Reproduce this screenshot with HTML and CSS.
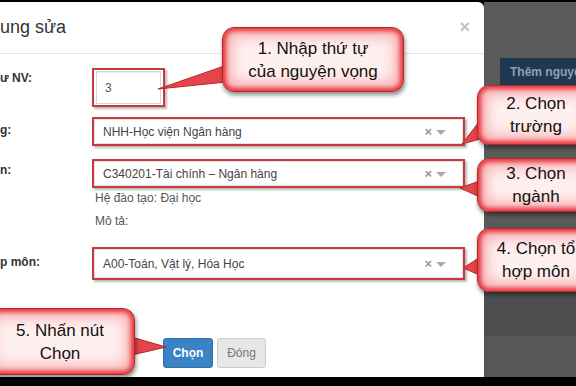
FILE: index.html
```html
<!DOCTYPE html>
<html lang="vi">
<head>
<meta charset="utf-8">
<link rel="stylesheet" href="styles.css">
</head>
<body>
<div class="stage">
  <div class="modal">
    <div class="modal-header">
      <span class="title">ung sửa</span>
      <span class="close">×</span>
    </div>
    <div class="modal-body">
      <div class="row r1">
        <label class="lbl">ư NV:</label>
        <div class="hl hl-input"><div class="input">3</div></div>
      </div>
      <div class="row r2">
        <label class="lbl">g:</label>
        <div class="hl"><div class="select"><span>NHH-Học viện Ngân hàng</span><span class="ctl"><span class="x">×</span><span class="caret"></span></span></div></div>
      </div>
      <div class="row r3">
        <label class="lbl">n:</label>
        <div class="field">
          <div class="hl"><div class="select"><span>C340201-Tài chính – Ngân hàng</span><span class="ctl"><span class="x">×</span><span class="caret"></span></span></div></div>
          <p class="help">Hệ đào tạo: Đại học</p>
          <p class="help">Mô tả:</p>
        </div>
      </div>
      <div class="row r4">
        <label class="lbl">p môn:</label>
        <div class="hl tall"><div class="select"><span>A00-Toán, Vật lý, Hóa Học</span><span class="ctl"><span class="x">×</span><span class="caret"></span></span></div></div>
      </div>
    </div>
    <div class="modal-footer">
      <button class="btn btn-primary">Chọn</button>
      <button class="btn btn-default">Đóng</button>
    </div>
  </div>
  <div class="backdrop">
    <div class="bd-top"><div class="add-btn">Thêm nguyện vọng</div></div>
    <div class="bd-mid"></div>
    <div class="bd-bot"></div>
  </div>
</div>

<svg class="pointers" width="576" height="386" viewBox="0 0 576 386">
  <polygon points="230,64 246,80 158,89"/>
  <polygon points="482,118 484,138 462,144"/>
  <polygon points="482,180 482,198 460,188"/>
  <polygon points="482,256 482,276 463,268"/>
  <polygon points="128,336 128,356 166,347"/>
</svg>

<div class="callout c1">1. Nhập thứ tự<br>của nguyện vọng</div>
<div class="callout c2">2. Chọn<br>trường</div>
<div class="callout c3">3. Chọn<br>ngành</div>
<div class="callout c4">4. Chọn tổ<br>hợp môn</div>
<div class="callout c5">5. Nhấn nút<br>Chọn</div>
</body>
</html>
```

FILE: styles.css
```css
* { box-sizing: border-box; }
html, body { margin: 0; padding: 0; }
body {
  width: 576px;
  height: 386px;
  overflow: hidden;
  background: #000;
  position: relative;
  font-family: "Liberation Sans", Arial, sans-serif;
  color: #333;
}
.stage {
  display: flex;
  padding-top: 2px;
  height: 377px;
}
.modal {
  flex: 0 0 484px;
  width: 484px;
  background: #fff;
  border-top-right-radius: 6px;
  display: flex;
  flex-direction: column;
}
.modal-header {
  height: 52px;
  border-bottom: 1px solid #e5e5e5;
  display: flex;
  align-items: center;
  justify-content: space-between;
  padding: 0 14px 0 0;
}
.title { font-size: 18px; color: #333; }
.close { font-size: 18px; color: #c4c4c4; font-weight: bold; }
.modal-body {
  padding: 14px 19px 0 0;
  display: flex;
  flex-direction: column;
}
.row {
  display: grid;
  grid-template-columns: 92px 1fr;
  align-items: start;
}
.r2 { margin-top: 10px; }
.r3 { margin-top: 13px; }
.r4 { margin-top: 14px; }
.lbl {
  font-size: 12px;
  font-weight: bold;
  line-height: 14px;
  color: #333;
}
.r1 .lbl { padding-top: 3px; }
.r2 .lbl { padding-top: 6px; }
.r3 .lbl { padding-top: 4px; }
.r4 .lbl { padding-top: 8px; }
.hl {
  border: 2px solid #c9393d;
  box-shadow: 2px 2px 2px rgba(0,0,0,.28);
}
.hl-input {
  width: 73px;
  padding: 1px 2px;
}
.input {
  height: 33px;
  border: 1px solid #d6d6d6;
  box-shadow: inset 0 1px 1px rgba(0,0,0,.08);
  font-size: 12px;
  color: #555;
  display: flex;
  align-items: center;
  padding-left: 8px;
}
.select {
  height: 25px;
  border: 1px solid #e2e2e2;
  display: flex;
  align-items: center;
  justify-content: space-between;
  font-size: 12px;
  color: #444;
  padding: 0 16px 0 8px;
}
.tall .select { height: 29px; }
.ctl { display: flex; align-items: center; gap: 4px; }
.x { color: #999; font-size: 13px; font-weight: bold; line-height: 12px; }
.caret {
  width: 0; height: 0;
  border-left: 5px solid transparent;
  border-right: 5px solid transparent;
  border-top: 5px solid #aaa;
  margin-top: 2px;
}
.help {
  margin: 0;
  font-size: 12px;
  line-height: 23px;
  color: #555;
  padding-left: 3px;
}
.help:first-of-type { margin-top: -1px; }
.modal-footer {
  margin-top: auto;
  padding: 0 0 9px 163px;
  display: flex;
  gap: 4px;
}
.btn {
  height: 30px;
  font-family: "Liberation Sans", Arial, sans-serif;
  font-size: 12px;
  border-radius: 3px;
  padding: 0;
}
.btn-primary {
  width: 50px;
  background: #3a84c5;
  border: 1px solid #2e6fa8;
  color: #fff;
  font-weight: bold;
}
.btn-default {
  width: 49px;
  background: #e6e7e8;
  border: 1px solid #ccc;
  color: #777;
}
.backdrop {
  flex: 1 1 auto;
  min-width: 0;
  display: flex;
  flex-direction: column;
}
.bd-top {
  flex: 1;
  background: #5a5a5a;
  padding: 56px 0 0 16px;
  overflow: hidden;
}
.bd-mid { height: 44px; background: #4c4e4f; }
.bd-bot { height: 41px; background: #565758; }
.add-btn {
  height: 28px;
  width: 120px;
  background: #1f3850;
  color: #8d9fb4;
  font-size: 12px;
  font-weight: bold;
  white-space: nowrap;
  padding-left: 10px;
  display: flex;
  align-items: center;
}
.pointers {
  position: absolute;
  left: 0; top: 0;
}
.pointers polygon {
  fill: #e5454a;
  stroke: #b3282d;
  stroke-width: 1;
  stroke-linejoin: round;
}
.callout {
  position: absolute;
  background: #fff0f0;
  border: 1px solid #b3262b;
  border-radius: 12px;
  box-shadow: inset 0 0 4px 3px #e8363c, inset 0 0 14px 8px rgba(240,95,100,.5), 1px 3px 4px rgba(0,0,0,.45);
  font-size: 17px;
  line-height: 23px;
  color: #111;
  text-align: center;
  display: flex;
  align-items: center;
  justify-content: center;
  white-space: nowrap;
}
.c1 { left: 222px; top: 27px; width: 182px; height: 65px; }
.c2 { left: 477px; top: 85px; width: 118px; height: 60px; }
.c3 { left: 477px; top: 158px; width: 118px; height: 54px; }
.c4 { left: 477px; top: 228px; width: 118px; height: 64px; }
.c5 { left: -15px; top: 308px; width: 150px; height: 67px; }
```
